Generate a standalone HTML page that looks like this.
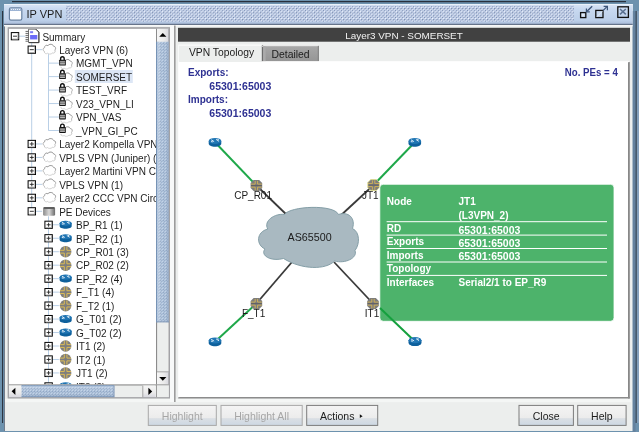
<!DOCTYPE html><html><head><meta charset="utf-8"><style>html,body{margin:0;padding:0;width:639px;height:432px;overflow:hidden;background:#7194b4}</style></head><body><svg width="639" height="432" viewBox="0 0 639 432" style="position:absolute;left:0;top:0;will-change:transform;font-family:'Liberation Sans',sans-serif"><defs><pattern id="tb" width="3.6" height="3.6" patternUnits="userSpaceOnUse"><rect width="3.6" height="3.6" fill="#bccbe6"/><rect x="0" y="0" width="1.1" height="1.1" fill="#f6f9ff"/><rect x="1.8" y="1.8" width="1.1" height="1.1" fill="#f6f9ff"/><rect x="1.00" y="1.00" width="1.1" height="1.1" fill="#62749a"/><rect x="2.80" y="2.80" width="1.1" height="1.1" fill="#62749a"/></pattern><pattern id="sb" width="3.0" height="3.0" patternUnits="userSpaceOnUse"><rect width="3.0" height="3.0" fill="#abc0da"/><rect x="0" y="0" width="0.9" height="0.9" fill="#cddaec"/><rect x="1.5" y="1.5" width="0.9" height="0.9" fill="#cddaec"/><rect x="0.85" y="0.85" width="0.9" height="0.9" fill="#7a92b4"/><rect x="2.35" y="2.35" width="0.9" height="0.9" fill="#7a92b4"/></pattern><linearGradient id="tg" x1="0" y1="0" x2="0" y2="1"><stop offset="0" stop-color="#dbe6f6"/><stop offset="0.25" stop-color="#c8d9f0"/><stop offset="0.8" stop-color="#bccfe9"/><stop offset="1" stop-color="#a8bad6"/></linearGradient><linearGradient id="btng" x1="0" y1="0" x2="0" y2="1"><stop offset="0" stop-color="#f4f4f4"/><stop offset="0.62" stop-color="#ececec"/><stop offset="0.66" stop-color="#dadfe4"/><stop offset="1" stop-color="#cdd8e3"/></linearGradient><linearGradient id="arrg" x1="0" y1="0" x2="1" y2="0"><stop offset="0" stop-color="#f6f6f6"/><stop offset="0.6" stop-color="#eaeaea"/><stop offset="1" stop-color="#d6d6de"/></linearGradient><linearGradient id="arrgv" x1="0" y1="0" x2="0" y2="1"><stop offset="0" stop-color="#f6f6f6"/><stop offset="0.6" stop-color="#eaeaea"/><stop offset="1" stop-color="#d6d6de"/></linearGradient><linearGradient id="tab2g" x1="0" y1="0" x2="0" y2="1"><stop offset="0" stop-color="#a8a8a8"/><stop offset="1" stop-color="#969696"/></linearGradient><linearGradient id="thg" x1="0" y1="0" x2="0" y2="1"><stop offset="0" stop-color="#ffffff" stop-opacity="0.25"/><stop offset="0.5" stop-color="#ffffff" stop-opacity="0"/><stop offset="1" stop-color="#46648c" stop-opacity="0.25"/></linearGradient><linearGradient id="tvg" x1="0" y1="0" x2="1" y2="0"><stop offset="0" stop-color="#ffffff" stop-opacity="0.25"/><stop offset="0.5" stop-color="#ffffff" stop-opacity="0"/><stop offset="1" stop-color="#46648c" stop-opacity="0.2"/></linearGradient></defs><rect x="0" y="0" width="639" height="432" fill="#6d92ae"/><rect x="12" y="1" width="614" height="1.2" fill="#28303c"/><rect x="2" y="11" width="1.1" height="412" fill="#2c3442"/><rect x="4" y="4" width="628.6" height="427" fill="#eceeed"/><rect x="4" y="4" width="1" height="427" fill="#727c8c"/><rect x="631.6" y="4" width="1" height="427" fill="#f2f4f4"/><rect x="632.6" y="11" width="3" height="421" fill="#64829f"/><rect x="636.7" y="11" width="2.3" height="412" fill="#84a0bc"/><rect x="635.6" y="11" width="1.1" height="412" fill="#36404e"/><rect x="4" y="4" width="628.6" height="20.5" fill="url(#tg)"/><rect x="4" y="4" width="628.6" height="0.9" fill="#eef3fb"/><rect x="66" y="5.8" width="508" height="16" fill="url(#tb)"/><rect x="4" y="23.8" width="628.6" height="1.2" fill="#66748a"/><rect x="4" y="25" width="628.6" height="1.4" fill="#f8f8f8"/><rect x="9.4" y="7.8" width="12.4" height="12.4" rx="1.6" fill="#ffffff" stroke="#6680a0" stroke-width="1.2"/><rect x="10" y="8.4" width="11.2" height="2.6" fill="#9db4d4"/><path d="M11 9.5h1M13 9.5h1M15 9.5h1M17 9.5h1M19 9.5h1" stroke="#fff" stroke-width="0.8"/><text x="26.5" y="18" font-size="11" fill="#1c1c1c">IP VPN</text><g fill="none" stroke="#111" stroke-width="1.3"><rect x="580.6" y="12.6" width="5.2" height="5"/><rect x="595.8" y="10.4" width="7.2" height="7.2"/><rect x="617.8" y="6.8" width="10.6" height="10.6"/></g><g stroke="#3c5478" stroke-width="1.1" fill="none"><path d="M587 11.2 L592.2 6.2" stroke-width="1.3"/><path d="M586.4 8.4 V11.8 H589.8" stroke-width="1.2"/><path d="M597 16.6 L602.2 11.4" stroke="#e8f0fa" stroke-width="1"/><path d="M603 10.6 L607 6.6" stroke-width="1.3"/><path d="M603.6 6.4 H607.4 V10.2" stroke-width="1.2"/><path d="M620 9 L625.8 14.4 M625.8 9 L620 14.4" stroke="#5a7090" stroke-width="1.5"/></g><rect x="581.8" y="13.8" width="2.6" height="2.6" fill="#dfe8f4"/><rect x="8.4" y="28" width="161.1" height="369.8" fill="#ffffff" stroke="#a2a2a6" stroke-width="1.2"/><defs><linearGradient id="peg" x1="0" x2="1"><stop offset="0" stop-color="#8a8a8a"/><stop offset="0.5" stop-color="#d8d8d8"/><stop offset="1" stop-color="#6a6a6a"/></linearGradient><linearGradient id="cg" x1="0" y1="0" x2="0" y2="1"><stop offset="0" stop-color="#8a8a8a"/><stop offset="0.6" stop-color="#b4b4b4"/><stop offset="1" stop-color="#d4d4d4"/></linearGradient><linearGradient id="cg2" x1="0" y1="0" x2="0" y2="1"><stop offset="0" stop-color="#909090"/><stop offset="0.5" stop-color="#b0b0b0"/><stop offset="1" stop-color="#d8d8d8"/></linearGradient><clipPath id="tc"><rect x="9" y="28.5" width="147" height="356"/></clipPath></defs><g clip-path="url(#tc)"><rect x="74.8" y="70.01" width="58" height="13" fill="#dce6f5"/><g stroke="#b9cfe6" stroke-width="1" fill="none"><path d="M31.7 43 V211.31" /><path d="M48.5 53.67 V130.49"/><path d="M48.5 216.31 V400"/><path d="M19.00 36.20 H25.30"/><path d="M31.50 49.67 H42.10"/><path d="M48.30 63.14 H58.90"/><path d="M48.30 76.61 H58.90"/><path d="M48.30 90.08 H58.90"/><path d="M48.30 103.55 H58.90"/><path d="M48.30 117.02 H58.90"/><path d="M48.30 130.49 H58.90"/><path d="M31.50 143.96 H42.10"/><path d="M31.50 157.43 H42.10"/><path d="M31.50 170.90 H42.10"/><path d="M31.50 184.37 H42.10"/><path d="M31.50 197.84 H42.10"/><path d="M31.50 211.31 H42.10"/><path d="M48.30 224.78 H58.90"/><path d="M48.30 238.25 H58.90"/><path d="M48.30 251.72 H58.90"/><path d="M48.30 265.19 H58.90"/><path d="M48.30 278.66 H58.90"/><path d="M48.30 292.13 H58.90"/><path d="M48.30 305.60 H58.90"/><path d="M48.30 319.07 H58.90"/><path d="M48.30 332.54 H58.90"/><path d="M48.30 346.01 H58.90"/><path d="M48.30 359.48 H58.90"/><path d="M48.30 372.95 H58.90"/><path d="M48.30 386.42 H58.90"/></g><rect x="11.30" y="32.60" width="7.4" height="7.2" fill="#fff" stroke="#000" stroke-width="1"/><path d="M12.30 39.10 H17.90 V33.40" fill="none" stroke="#a0a0a0" stroke-width="0.8"/><path d="M13.00 36.20 H17.00" stroke="#222" stroke-width="0.9"/><g transform="translate(25.30,28.80)"><path d="M3.2 0.4 H10.6 L13.6 3.4 V13.8 H3.2 Z" fill="#fff" stroke="#666" stroke-width="0.9"/><path d="M13.6 3.4 V13.8 H3.6" fill="none" stroke="#3c3c3c" stroke-width="1"/><path d="M10.6 0.4 L13.6 3.4" fill="none" stroke="#3c3c3c" stroke-width="1"/><rect x="4.8" y="2.4" width="3" height="2" fill="#7c7cf4"/><rect x="4.8" y="6.2" width="7.2" height="4.4" fill="#6c6cf8"/><path d="M0.2 2.6h3M0.2 4.6h3M0.2 6.6h3M0.2 8.6h3M0.2 10.6h3M0.2 12.4h3" stroke="#555" stroke-width="0.9"/></g><text x="42.40" y="40.50" font-size="10" fill="#1e1e1e">Summary</text><rect x="28.10" y="46.07" width="7.4" height="7.2" fill="#fff" stroke="#000" stroke-width="1"/><path d="M29.10 52.57 H34.70 V46.87" fill="none" stroke="#a0a0a0" stroke-width="0.8"/><path d="M29.80 49.67 H33.80" stroke="#222" stroke-width="0.9"/><g transform="translate(42.30,43.67)" fill="none"><path d="M2 7.6 C0.3 7.2 0.3 4.2 2.3 4 C2 2 4.2 1 5.6 2 C6.5 0.2 10.5 0 11.3 2.6 C13.5 2.6 14 5.2 12.6 6.4 C13.6 8.4 11.8 10 10 9.4 C9 10.8 6 10.8 5.2 9.6 C4 10.6 2 10 2 7.6 Z" stroke="url(#cg)" stroke-width="1"/></g><text x="59.20" y="53.97" font-size="10" fill="#1e1e1e">Layer3 VPN (6)</text><g transform="translate(58.90,55.74)"><path d="M6.5 4.6 C7.5 3.4 10.5 3.2 11.3 5.4 C13.5 5.4 14 8 12.6 9.2 C13.6 11.2 11.8 12.8 10 12.2 C9 13.6 6 13.6 5.2 12.4 C4 13.4 2 12.8 2 11" fill="none" stroke="url(#cg2)" stroke-width="1"/><path d="M1.7 4.4 V3 C1.7 0.4 5.3 0.4 5.3 3 V4.4" fill="none" stroke="#111" stroke-width="1.4"/><rect x="0.3" y="4" width="6.6" height="5.8" rx="0.6" fill="#111"/><rect x="1.2" y="5" width="4.8" height="3.9" fill="#6c6c6c"/><rect x="1.2" y="5.6" width="4.8" height="0.9" fill="#b4b4b4"/><rect x="1.2" y="7.7" width="4.8" height="0.8" fill="#dedede"/></g><text x="76.00" y="67.44" font-size="10" fill="#1e1e1e">MGMT_VPN</text><g transform="translate(58.90,69.21)"><path d="M6.5 4.6 C7.5 3.4 10.5 3.2 11.3 5.4 C13.5 5.4 14 8 12.6 9.2 C13.6 11.2 11.8 12.8 10 12.2 C9 13.6 6 13.6 5.2 12.4 C4 13.4 2 12.8 2 11" fill="none" stroke="url(#cg2)" stroke-width="1"/><path d="M1.7 4.4 V3 C1.7 0.4 5.3 0.4 5.3 3 V4.4" fill="none" stroke="#111" stroke-width="1.4"/><rect x="0.3" y="4" width="6.6" height="5.8" rx="0.6" fill="#111"/><rect x="1.2" y="5" width="4.8" height="3.9" fill="#6c6c6c"/><rect x="1.2" y="5.6" width="4.8" height="0.9" fill="#b4b4b4"/><rect x="1.2" y="7.7" width="4.8" height="0.8" fill="#dedede"/></g><text x="76.00" y="80.91" font-size="10" fill="#1e1e1e">SOMERSET</text><g transform="translate(58.90,82.68)"><path d="M6.5 4.6 C7.5 3.4 10.5 3.2 11.3 5.4 C13.5 5.4 14 8 12.6 9.2 C13.6 11.2 11.8 12.8 10 12.2 C9 13.6 6 13.6 5.2 12.4 C4 13.4 2 12.8 2 11" fill="none" stroke="url(#cg2)" stroke-width="1"/><path d="M1.7 4.4 V3 C1.7 0.4 5.3 0.4 5.3 3 V4.4" fill="none" stroke="#111" stroke-width="1.4"/><rect x="0.3" y="4" width="6.6" height="5.8" rx="0.6" fill="#111"/><rect x="1.2" y="5" width="4.8" height="3.9" fill="#6c6c6c"/><rect x="1.2" y="5.6" width="4.8" height="0.9" fill="#b4b4b4"/><rect x="1.2" y="7.7" width="4.8" height="0.8" fill="#dedede"/></g><text x="76.00" y="94.38" font-size="10" fill="#1e1e1e">TEST_VRF</text><g transform="translate(58.90,96.15)"><path d="M6.5 4.6 C7.5 3.4 10.5 3.2 11.3 5.4 C13.5 5.4 14 8 12.6 9.2 C13.6 11.2 11.8 12.8 10 12.2 C9 13.6 6 13.6 5.2 12.4 C4 13.4 2 12.8 2 11" fill="none" stroke="url(#cg2)" stroke-width="1"/><path d="M1.7 4.4 V3 C1.7 0.4 5.3 0.4 5.3 3 V4.4" fill="none" stroke="#111" stroke-width="1.4"/><rect x="0.3" y="4" width="6.6" height="5.8" rx="0.6" fill="#111"/><rect x="1.2" y="5" width="4.8" height="3.9" fill="#6c6c6c"/><rect x="1.2" y="5.6" width="4.8" height="0.9" fill="#b4b4b4"/><rect x="1.2" y="7.7" width="4.8" height="0.8" fill="#dedede"/></g><text x="76.00" y="107.85" font-size="10" fill="#1e1e1e">V23_VPN_LI</text><g transform="translate(58.90,109.62)"><path d="M6.5 4.6 C7.5 3.4 10.5 3.2 11.3 5.4 C13.5 5.4 14 8 12.6 9.2 C13.6 11.2 11.8 12.8 10 12.2 C9 13.6 6 13.6 5.2 12.4 C4 13.4 2 12.8 2 11" fill="none" stroke="url(#cg2)" stroke-width="1"/><path d="M1.7 4.4 V3 C1.7 0.4 5.3 0.4 5.3 3 V4.4" fill="none" stroke="#111" stroke-width="1.4"/><rect x="0.3" y="4" width="6.6" height="5.8" rx="0.6" fill="#111"/><rect x="1.2" y="5" width="4.8" height="3.9" fill="#6c6c6c"/><rect x="1.2" y="5.6" width="4.8" height="0.9" fill="#b4b4b4"/><rect x="1.2" y="7.7" width="4.8" height="0.8" fill="#dedede"/></g><text x="76.00" y="121.32" font-size="10" fill="#1e1e1e">VPN_VAS</text><g transform="translate(58.90,123.09)"><path d="M6.5 4.6 C7.5 3.4 10.5 3.2 11.3 5.4 C13.5 5.4 14 8 12.6 9.2 C13.6 11.2 11.8 12.8 10 12.2 C9 13.6 6 13.6 5.2 12.4 C4 13.4 2 12.8 2 11" fill="none" stroke="url(#cg2)" stroke-width="1"/><path d="M1.7 4.4 V3 C1.7 0.4 5.3 0.4 5.3 3 V4.4" fill="none" stroke="#111" stroke-width="1.4"/><rect x="0.3" y="4" width="6.6" height="5.8" rx="0.6" fill="#111"/><rect x="1.2" y="5" width="4.8" height="3.9" fill="#6c6c6c"/><rect x="1.2" y="5.6" width="4.8" height="0.9" fill="#b4b4b4"/><rect x="1.2" y="7.7" width="4.8" height="0.8" fill="#dedede"/></g><text x="76.00" y="134.79" font-size="10" fill="#1e1e1e">_VPN_GI_PC</text><rect x="28.10" y="140.36" width="7.4" height="7.2" fill="#fff" stroke="#000" stroke-width="1"/><path d="M29.10 146.86 H34.70 V141.16" fill="none" stroke="#a0a0a0" stroke-width="0.8"/><path d="M29.80 143.96 H33.80" stroke="#222" stroke-width="0.9"/><path d="M31.80 141.96 V145.96" stroke="#222" stroke-width="0.9"/><g transform="translate(42.30,137.96)" fill="none"><path d="M2 7.6 C0.3 7.2 0.3 4.2 2.3 4 C2 2 4.2 1 5.6 2 C6.5 0.2 10.5 0 11.3 2.6 C13.5 2.6 14 5.2 12.6 6.4 C13.6 8.4 11.8 10 10 9.4 C9 10.8 6 10.8 5.2 9.6 C4 10.6 2 10 2 7.6 Z" stroke="url(#cg)" stroke-width="1"/></g><text x="59.20" y="148.26" font-size="10" fill="#1e1e1e">Layer2 Kompella VPN (0)</text><rect x="28.10" y="153.83" width="7.4" height="7.2" fill="#fff" stroke="#000" stroke-width="1"/><path d="M29.10 160.33 H34.70 V154.63" fill="none" stroke="#a0a0a0" stroke-width="0.8"/><path d="M29.80 157.43 H33.80" stroke="#222" stroke-width="0.9"/><path d="M31.80 155.43 V159.43" stroke="#222" stroke-width="0.9"/><g transform="translate(42.30,151.43)" fill="none"><path d="M2 7.6 C0.3 7.2 0.3 4.2 2.3 4 C2 2 4.2 1 5.6 2 C6.5 0.2 10.5 0 11.3 2.6 C13.5 2.6 14 5.2 12.6 6.4 C13.6 8.4 11.8 10 10 9.4 C9 10.8 6 10.8 5.2 9.6 C4 10.6 2 10 2 7.6 Z" stroke="url(#cg)" stroke-width="1"/></g><text x="59.20" y="161.73" font-size="10" fill="#1e1e1e">VPLS VPN (Juniper) (0)</text><rect x="28.10" y="167.30" width="7.4" height="7.2" fill="#fff" stroke="#000" stroke-width="1"/><path d="M29.10 173.80 H34.70 V168.10" fill="none" stroke="#a0a0a0" stroke-width="0.8"/><path d="M29.80 170.90 H33.80" stroke="#222" stroke-width="0.9"/><path d="M31.80 168.90 V172.90" stroke="#222" stroke-width="0.9"/><g transform="translate(42.30,164.90)" fill="none"><path d="M2 7.6 C0.3 7.2 0.3 4.2 2.3 4 C2 2 4.2 1 5.6 2 C6.5 0.2 10.5 0 11.3 2.6 C13.5 2.6 14 5.2 12.6 6.4 C13.6 8.4 11.8 10 10 9.4 C9 10.8 6 10.8 5.2 9.6 C4 10.6 2 10 2 7.6 Z" stroke="url(#cg)" stroke-width="1"/></g><text x="59.20" y="175.20" font-size="10" fill="#1e1e1e">Layer2 Martini VPN Circuits</text><rect x="28.10" y="180.77" width="7.4" height="7.2" fill="#fff" stroke="#000" stroke-width="1"/><path d="M29.10 187.27 H34.70 V181.57" fill="none" stroke="#a0a0a0" stroke-width="0.8"/><path d="M29.80 184.37 H33.80" stroke="#222" stroke-width="0.9"/><path d="M31.80 182.37 V186.37" stroke="#222" stroke-width="0.9"/><g transform="translate(42.30,178.37)" fill="none"><path d="M2 7.6 C0.3 7.2 0.3 4.2 2.3 4 C2 2 4.2 1 5.6 2 C6.5 0.2 10.5 0 11.3 2.6 C13.5 2.6 14 5.2 12.6 6.4 C13.6 8.4 11.8 10 10 9.4 C9 10.8 6 10.8 5.2 9.6 C4 10.6 2 10 2 7.6 Z" stroke="url(#cg)" stroke-width="1"/></g><text x="59.20" y="188.67" font-size="10" fill="#1e1e1e">VPLS VPN (1)</text><rect x="28.10" y="194.24" width="7.4" height="7.2" fill="#fff" stroke="#000" stroke-width="1"/><path d="M29.10 200.74 H34.70 V195.04" fill="none" stroke="#a0a0a0" stroke-width="0.8"/><path d="M29.80 197.84 H33.80" stroke="#222" stroke-width="0.9"/><path d="M31.80 195.84 V199.84" stroke="#222" stroke-width="0.9"/><g transform="translate(42.30,191.84)" fill="none"><path d="M2 7.6 C0.3 7.2 0.3 4.2 2.3 4 C2 2 4.2 1 5.6 2 C6.5 0.2 10.5 0 11.3 2.6 C13.5 2.6 14 5.2 12.6 6.4 C13.6 8.4 11.8 10 10 9.4 C9 10.8 6 10.8 5.2 9.6 C4 10.6 2 10 2 7.6 Z" stroke="url(#cg)" stroke-width="1"/></g><text x="59.20" y="202.14" font-size="10" fill="#1e1e1e">Layer2 CCC VPN Circuits</text><rect x="28.10" y="207.71" width="7.4" height="7.2" fill="#fff" stroke="#000" stroke-width="1"/><path d="M29.10 214.21 H34.70 V208.51" fill="none" stroke="#a0a0a0" stroke-width="0.8"/><path d="M29.80 211.31 H33.80" stroke="#222" stroke-width="0.9"/><g transform="translate(43.10,206.81)"><rect x="0" y="0.3" width="12" height="8.7" rx="1.6" fill="url(#peg)"/><rect x="0.4" y="0.3" width="11.2" height="2" rx="1" fill="#5e5e5e"/></g><text x="59.20" y="215.61" font-size="10" fill="#1e1e1e">PE Devices</text><rect x="44.90" y="221.18" width="7.4" height="7.2" fill="#fff" stroke="#000" stroke-width="1"/><path d="M45.90 227.68 H51.50 V221.98" fill="none" stroke="#a0a0a0" stroke-width="0.8"/><path d="M46.60 224.78 H50.60" stroke="#222" stroke-width="0.9"/><path d="M48.60 222.78 V226.78" stroke="#222" stroke-width="0.9"/><g transform="translate(59.40,220.38)"><path d="M0.2 2.8 V5.6 C0.2 7.4 3 8.3 6.25 8.3 C9.5 8.3 12.3 7.4 12.3 5.6 V2.8 Z" fill="#0e609c"/><ellipse cx="6.25" cy="2.9" rx="6.05" ry="2.6" fill="#1f74b2"/><path d="M2.6 1.9 L5.4 3.6 M2.4 3.6 L4.2 3.9 M7.4 1.6 L10.2 3.4 M8.6 1.5 L10 1.9" stroke="#f0f8ff" stroke-width="0.9" fill="none"/></g><text x="76.00" y="229.08" font-size="10" fill="#1e1e1e">BP_R1 (1)</text><rect x="44.90" y="234.65" width="7.4" height="7.2" fill="#fff" stroke="#000" stroke-width="1"/><path d="M45.90 241.15 H51.50 V235.45" fill="none" stroke="#a0a0a0" stroke-width="0.8"/><path d="M46.60 238.25 H50.60" stroke="#222" stroke-width="0.9"/><path d="M48.60 236.25 V240.25" stroke="#222" stroke-width="0.9"/><g transform="translate(59.40,233.85)"><path d="M0.2 2.8 V5.6 C0.2 7.4 3 8.3 6.25 8.3 C9.5 8.3 12.3 7.4 12.3 5.6 V2.8 Z" fill="#0e609c"/><ellipse cx="6.25" cy="2.9" rx="6.05" ry="2.6" fill="#1f74b2"/><path d="M2.6 1.9 L5.4 3.6 M2.4 3.6 L4.2 3.9 M7.4 1.6 L10.2 3.4 M8.6 1.5 L10 1.9" stroke="#f0f8ff" stroke-width="0.9" fill="none"/></g><text x="76.00" y="242.55" font-size="10" fill="#1e1e1e">BP_R2 (1)</text><rect x="44.90" y="248.12" width="7.4" height="7.2" fill="#fff" stroke="#000" stroke-width="1"/><path d="M45.90 254.62 H51.50 V248.92" fill="none" stroke="#a0a0a0" stroke-width="0.8"/><path d="M46.60 251.72 H50.60" stroke="#222" stroke-width="0.9"/><path d="M48.60 249.72 V253.72" stroke="#222" stroke-width="0.9"/><g transform="translate(59.60,245.92)"><circle cx="6" cy="5.8" r="5.8" fill="#7e7e7e"/><path d="M4.7 0.6 V4.4 H0.5 M7.3 0.6 V4.4 H11.5 M4.7 11 V7.2 H0.5 M7.3 11 V7.2 H11.5" fill="none" stroke="#dcbc56" stroke-width="1"/></g><text x="76.00" y="256.02" font-size="10" fill="#1e1e1e">CP_R01 (3)</text><rect x="44.90" y="261.59" width="7.4" height="7.2" fill="#fff" stroke="#000" stroke-width="1"/><path d="M45.90 268.09 H51.50 V262.39" fill="none" stroke="#a0a0a0" stroke-width="0.8"/><path d="M46.60 265.19 H50.60" stroke="#222" stroke-width="0.9"/><path d="M48.60 263.19 V267.19" stroke="#222" stroke-width="0.9"/><g transform="translate(59.60,259.39)"><circle cx="6" cy="5.8" r="5.8" fill="#7e7e7e"/><path d="M4.7 0.6 V4.4 H0.5 M7.3 0.6 V4.4 H11.5 M4.7 11 V7.2 H0.5 M7.3 11 V7.2 H11.5" fill="none" stroke="#dcbc56" stroke-width="1"/></g><text x="76.00" y="269.49" font-size="10" fill="#1e1e1e">CP_R02 (2)</text><rect x="44.90" y="275.06" width="7.4" height="7.2" fill="#fff" stroke="#000" stroke-width="1"/><path d="M45.90 281.56 H51.50 V275.86" fill="none" stroke="#a0a0a0" stroke-width="0.8"/><path d="M46.60 278.66 H50.60" stroke="#222" stroke-width="0.9"/><path d="M48.60 276.66 V280.66" stroke="#222" stroke-width="0.9"/><g transform="translate(59.40,274.26)"><path d="M0.2 2.8 V5.6 C0.2 7.4 3 8.3 6.25 8.3 C9.5 8.3 12.3 7.4 12.3 5.6 V2.8 Z" fill="#0e609c"/><ellipse cx="6.25" cy="2.9" rx="6.05" ry="2.6" fill="#1f74b2"/><path d="M2.6 1.9 L5.4 3.6 M2.4 3.6 L4.2 3.9 M7.4 1.6 L10.2 3.4 M8.6 1.5 L10 1.9" stroke="#f0f8ff" stroke-width="0.9" fill="none"/></g><text x="76.00" y="282.96" font-size="10" fill="#1e1e1e">EP_R2 (4)</text><rect x="44.90" y="288.53" width="7.4" height="7.2" fill="#fff" stroke="#000" stroke-width="1"/><path d="M45.90 295.03 H51.50 V289.33" fill="none" stroke="#a0a0a0" stroke-width="0.8"/><path d="M46.60 292.13 H50.60" stroke="#222" stroke-width="0.9"/><path d="M48.60 290.13 V294.13" stroke="#222" stroke-width="0.9"/><g transform="translate(59.60,286.33)"><circle cx="6" cy="5.8" r="5.8" fill="#7e7e7e"/><path d="M4.7 0.6 V4.4 H0.5 M7.3 0.6 V4.4 H11.5 M4.7 11 V7.2 H0.5 M7.3 11 V7.2 H11.5" fill="none" stroke="#dcbc56" stroke-width="1"/></g><text x="76.00" y="296.43" font-size="10" fill="#1e1e1e">F_T1 (4)</text><rect x="44.90" y="302.00" width="7.4" height="7.2" fill="#fff" stroke="#000" stroke-width="1"/><path d="M45.90 308.50 H51.50 V302.80" fill="none" stroke="#a0a0a0" stroke-width="0.8"/><path d="M46.60 305.60 H50.60" stroke="#222" stroke-width="0.9"/><path d="M48.60 303.60 V307.60" stroke="#222" stroke-width="0.9"/><g transform="translate(59.60,299.80)"><circle cx="6" cy="5.8" r="5.8" fill="#7e7e7e"/><path d="M4.7 0.6 V4.4 H0.5 M7.3 0.6 V4.4 H11.5 M4.7 11 V7.2 H0.5 M7.3 11 V7.2 H11.5" fill="none" stroke="#dcbc56" stroke-width="1"/></g><text x="76.00" y="309.90" font-size="10" fill="#1e1e1e">F_T2 (1)</text><rect x="44.90" y="315.47" width="7.4" height="7.2" fill="#fff" stroke="#000" stroke-width="1"/><path d="M45.90 321.97 H51.50 V316.27" fill="none" stroke="#a0a0a0" stroke-width="0.8"/><path d="M46.60 319.07 H50.60" stroke="#222" stroke-width="0.9"/><path d="M48.60 317.07 V321.07" stroke="#222" stroke-width="0.9"/><g transform="translate(59.40,314.67)"><path d="M0.2 2.8 V5.6 C0.2 7.4 3 8.3 6.25 8.3 C9.5 8.3 12.3 7.4 12.3 5.6 V2.8 Z" fill="#0e609c"/><ellipse cx="6.25" cy="2.9" rx="6.05" ry="2.6" fill="#1f74b2"/><path d="M2.6 1.9 L5.4 3.6 M2.4 3.6 L4.2 3.9 M7.4 1.6 L10.2 3.4 M8.6 1.5 L10 1.9" stroke="#f0f8ff" stroke-width="0.9" fill="none"/></g><text x="76.00" y="323.37" font-size="10" fill="#1e1e1e">G_T01 (2)</text><rect x="44.90" y="328.94" width="7.4" height="7.2" fill="#fff" stroke="#000" stroke-width="1"/><path d="M45.90 335.44 H51.50 V329.74" fill="none" stroke="#a0a0a0" stroke-width="0.8"/><path d="M46.60 332.54 H50.60" stroke="#222" stroke-width="0.9"/><path d="M48.60 330.54 V334.54" stroke="#222" stroke-width="0.9"/><g transform="translate(59.40,328.14)"><path d="M0.2 2.8 V5.6 C0.2 7.4 3 8.3 6.25 8.3 C9.5 8.3 12.3 7.4 12.3 5.6 V2.8 Z" fill="#0e609c"/><ellipse cx="6.25" cy="2.9" rx="6.05" ry="2.6" fill="#1f74b2"/><path d="M2.6 1.9 L5.4 3.6 M2.4 3.6 L4.2 3.9 M7.4 1.6 L10.2 3.4 M8.6 1.5 L10 1.9" stroke="#f0f8ff" stroke-width="0.9" fill="none"/></g><text x="76.00" y="336.84" font-size="10" fill="#1e1e1e">G_T02 (2)</text><rect x="44.90" y="342.41" width="7.4" height="7.2" fill="#fff" stroke="#000" stroke-width="1"/><path d="M45.90 348.91 H51.50 V343.21" fill="none" stroke="#a0a0a0" stroke-width="0.8"/><path d="M46.60 346.01 H50.60" stroke="#222" stroke-width="0.9"/><path d="M48.60 344.01 V348.01" stroke="#222" stroke-width="0.9"/><g transform="translate(59.60,340.21)"><circle cx="6" cy="5.8" r="5.8" fill="#7e7e7e"/><path d="M4.7 0.6 V4.4 H0.5 M7.3 0.6 V4.4 H11.5 M4.7 11 V7.2 H0.5 M7.3 11 V7.2 H11.5" fill="none" stroke="#dcbc56" stroke-width="1"/></g><text x="76.00" y="350.31" font-size="10" fill="#1e1e1e">IT1 (2)</text><rect x="44.90" y="355.88" width="7.4" height="7.2" fill="#fff" stroke="#000" stroke-width="1"/><path d="M45.90 362.38 H51.50 V356.68" fill="none" stroke="#a0a0a0" stroke-width="0.8"/><path d="M46.60 359.48 H50.60" stroke="#222" stroke-width="0.9"/><path d="M48.60 357.48 V361.48" stroke="#222" stroke-width="0.9"/><g transform="translate(59.60,353.68)"><circle cx="6" cy="5.8" r="5.8" fill="#7e7e7e"/><path d="M4.7 0.6 V4.4 H0.5 M7.3 0.6 V4.4 H11.5 M4.7 11 V7.2 H0.5 M7.3 11 V7.2 H11.5" fill="none" stroke="#dcbc56" stroke-width="1"/></g><text x="76.00" y="363.78" font-size="10" fill="#1e1e1e">IT2 (1)</text><rect x="44.90" y="369.35" width="7.4" height="7.2" fill="#fff" stroke="#000" stroke-width="1"/><path d="M45.90 375.85 H51.50 V370.15" fill="none" stroke="#a0a0a0" stroke-width="0.8"/><path d="M46.60 372.95 H50.60" stroke="#222" stroke-width="0.9"/><path d="M48.60 370.95 V374.95" stroke="#222" stroke-width="0.9"/><g transform="translate(59.60,367.15)"><circle cx="6" cy="5.8" r="5.8" fill="#7e7e7e"/><path d="M4.7 0.6 V4.4 H0.5 M7.3 0.6 V4.4 H11.5 M4.7 11 V7.2 H0.5 M7.3 11 V7.2 H11.5" fill="none" stroke="#dcbc56" stroke-width="1"/></g><text x="76.00" y="377.25" font-size="10" fill="#1e1e1e">JT1 (2)</text><rect x="44.90" y="382.82" width="7.4" height="7.2" fill="#fff" stroke="#000" stroke-width="1"/><path d="M45.90 389.32 H51.50 V383.62" fill="none" stroke="#a0a0a0" stroke-width="0.8"/><path d="M46.60 386.42 H50.60" stroke="#222" stroke-width="0.9"/><path d="M48.60 384.42 V388.42" stroke="#222" stroke-width="0.9"/><g transform="translate(59.40,382.02)"><path d="M0.2 2.8 V5.6 C0.2 7.4 3 8.3 6.25 8.3 C9.5 8.3 12.3 7.4 12.3 5.6 V2.8 Z" fill="#0e609c"/><ellipse cx="6.25" cy="2.9" rx="6.05" ry="2.6" fill="#1f74b2"/><path d="M2.6 1.9 L5.4 3.6 M2.4 3.6 L4.2 3.9 M7.4 1.6 L10.2 3.4 M8.6 1.5 L10 1.9" stroke="#f0f8ff" stroke-width="0.9" fill="none"/></g><text x="76.00" y="390.72" font-size="10" fill="#1e1e1e">IT3 (3)</text></g><rect x="156" y="28.5" width="13.2" height="356" fill="#eceeed"/><rect x="156" y="28.5" width="1.1" height="356" fill="#8c8c8c"/><rect x="168.2" y="28.5" width="1" height="356" fill="#c8c8c8"/><rect x="157" y="28.6" width="12" height="13.2" fill="url(#arrg)"/><rect x="168" y="28.6" width="1.1" height="13.2" fill="#b4b4b8"/><path d="M162.8 32.9 L166.4 36.8 H159.2 Z" fill="#000"/><rect x="156.5" y="41.8" width="12.6" height="280.4" fill="url(#sb)"/><rect x="156.5" y="41.8" width="12.6" height="280.4" fill="url(#tvg)"/><rect x="156.2" y="41.8" width="1.1" height="280.4" fill="#6a8cb4"/><rect x="157.3" y="41.8" width="1" height="280.4" fill="#c6d6ea" opacity="0.8"/><rect x="167.8" y="41.8" width="1.2" height="280.4" fill="#98aac4" opacity="0.8"/><rect x="156.2" y="321.4" width="12.9" height="0.9" fill="#7d94b4"/><rect x="157" y="371.9" width="12" height="12.5" fill="url(#arrg)"/><rect x="157" y="371.4" width="12" height="0.9" fill="#a0a0a0"/><rect x="168" y="371.9" width="1.1" height="12.5" fill="#b4b4b8"/><path d="M159.2 377 H166.4 L162.8 380.8 Z" fill="#000"/><rect x="9" y="384.6" width="160.2" height="12.9" fill="#eceeed"/><rect x="9" y="384.4" width="160.2" height="1.1" fill="#8c8c8c"/><rect x="9" y="385.5" width="12.5" height="12" fill="url(#arrgv)"/><path d="M11.6 391.3 L15.4 387.7 V395 Z" fill="#000"/><rect x="21.5" y="385.4" width="92.6" height="12" fill="url(#sb)"/><rect x="21.5" y="385.4" width="92.6" height="12" fill="url(#thg)"/><rect x="21.5" y="385.4" width="92.6" height="1" fill="#6a8cb4"/><rect x="21.5" y="396.3" width="92.6" height="1" fill="#7a94b8"/><rect x="21.5" y="386.4" width="92.6" height="1" fill="#c6d6ea" opacity="0.8"/><rect x="113.6" y="385.4" width="0.9" height="12" fill="#7d94b4"/><rect x="142.5" y="385.5" width="13" height="12" fill="url(#arrgv)"/><rect x="142.3" y="385.5" width="1" height="12" fill="#a4a4a4"/><path d="M148.4 387.8 L152.2 391.4 L148.4 395 Z" fill="#000"/><rect x="156" y="385.5" width="13.2" height="12" fill="#eceeed"/><rect x="156" y="384.4" width="1" height="13" fill="#9a9a9a"/><rect x="8.4" y="28" width="161.1" height="369.8" fill="none" stroke="#a2a2a6" stroke-width="1.2"/><rect x="5" y="398.8" width="626" height="3.4" fill="#f4f6f5"/><rect x="170" y="26" width="4" height="376" fill="#f8f9f9"/><rect x="174" y="25.5" width="1.6" height="376.5" fill="#9c9c9c"/><rect x="178" y="27.8" width="452" height="13.9" fill="#414141"/><text x="404" y="39.2" font-size="9.9" fill="#f2f2f2" text-anchor="middle">Layer3 VPN - SOMERSET</text><rect x="179" y="62" width="450" height="336" fill="#ffffff"/><rect x="628" y="62" width="1.8" height="336.5" fill="#888888"/><rect x="178.2" y="397" width="451.5" height="1.5" fill="#8c8c8c"/><rect x="178.2" y="61.2" width="451" height="1" fill="#ffffff"/><rect x="178.2" y="44.8" width="1" height="352.5" fill="#ffffff"/><rect x="178.8" y="44.8" width="83.2" height="17.2" fill="#eceeed"/><rect x="178.8" y="44.6" width="83" height="1" fill="#ffffff"/><text x="189" y="55.6" font-size="10.3" fill="#1c1c1c">VPN Topology</text><rect x="262" y="45.5" width="56.8" height="15.6" fill="url(#tab2g)"/><rect x="261.8" y="45.5" width="1.3" height="15.6" fill="#6c6c6c"/><rect x="263.4" y="45.2" width="55" height="1" fill="#f0f0f0"/><path d="M262.2 47 L263.6 45.6" stroke="#f0f0f0" stroke-width="0.9"/><rect x="263.1" y="46.2" width="2.5" height="14.9" fill="#ababab"/><rect x="317.8" y="46" width="1" height="15" fill="#7e7e7e"/><text x="271.5" y="57.8" font-size="10.4" fill="#1c1c1c">Detailed</text><defs><clipPath id="cc"><rect x="180" y="63" width="448" height="334"/></clipPath></defs><g clip-path="url(#cc)"><g font-weight="bold" font-size="10" fill="#2e3192"><text x="188" y="76.2">Exports:</text><text x="209.3" y="89.7" textLength="62" lengthAdjust="spacingAndGlyphs">65301:65003</text><text x="188" y="102.9">Imports:</text><text x="209.3" y="116.5" textLength="62" lengthAdjust="spacingAndGlyphs">65301:65003</text><text x="617.8" y="76" text-anchor="end" textLength="53" lengthAdjust="spacingAndGlyphs">No. PEs = 4</text></g><g stroke="#1fa84a" stroke-width="2" fill="none"><path d="M215 142.2 L256.4 185.5"/><path d="M414.8 142.2 L373.6 185"/><path d="M215 341.7 L256.4 303.5"/></g><g stroke="#3a3a3a" stroke-width="1.8" fill="none"><path d="M256.4 185.5 L290 218"/><path d="M373.6 185 L338 218"/><path d="M256.4 303.5 L292 262"/><path d="M373 303.5 L334 262"/></g><path d="M284.5 214.5 C290 206 334 204 338.5 214.5 C348 211 356 218 352.5 228.5 C360 232 360 244 355 250.5 C358 258 345 264 334.5 261 C326 270 302 270 283.5 258.5 C270 262 260 255 265 249 C256 245 256 232 267.8 229 C263 221 275 213 284.5 214.5 Z" fill="#a9b9c1" stroke="#7d98a2" stroke-width="0.9"/><text x="287.6" y="240.9" font-size="10.5" fill="#1a1a1a" textLength="44" lengthAdjust="spacingAndGlyphs">AS65500</text><g transform="translate(208.60,137.70)"><path d="M0.1 3.2 V5.8 C0.1 7.8 3 9 6.4 9 C9.8 9 12.7 7.8 12.7 5.8 V3.2 Z" fill="#0e609c"/><ellipse cx="6.4" cy="3.2" rx="6.3" ry="3" fill="#2076b4"/><path d="M2.6 2.1 L5.5 3.9 M2.4 3.9 L4.2 4.2 M7.5 1.7 L10.4 3.6 M8.8 1.6 L10.2 2" stroke="#f0f8ff" stroke-width="0.9" fill="none"/></g><g transform="translate(408.40,137.70)"><path d="M0.1 3.2 V5.8 C0.1 7.8 3 9 6.4 9 C9.8 9 12.7 7.8 12.7 5.8 V3.2 Z" fill="#0e609c"/><ellipse cx="6.4" cy="3.2" rx="6.3" ry="3" fill="#2076b4"/><path d="M2.6 2.1 L5.5 3.9 M2.4 3.9 L4.2 4.2 M7.5 1.7 L10.4 3.6 M8.8 1.6 L10.2 2" stroke="#f0f8ff" stroke-width="0.9" fill="none"/></g><g transform="translate(208.60,337.20)"><path d="M0.1 3.2 V5.8 C0.1 7.8 3 9 6.4 9 C9.8 9 12.7 7.8 12.7 5.8 V3.2 Z" fill="#0e609c"/><ellipse cx="6.4" cy="3.2" rx="6.3" ry="3" fill="#2076b4"/><path d="M2.6 2.1 L5.5 3.9 M2.4 3.9 L4.2 4.2 M7.5 1.7 L10.4 3.6 M8.8 1.6 L10.2 2" stroke="#f0f8ff" stroke-width="0.9" fill="none"/></g><g transform="translate(408.60,337.00)"><path d="M0.1 3.2 V5.8 C0.1 7.8 3 9 6.4 9 C9.8 9 12.7 7.8 12.7 5.8 V3.2 Z" fill="#0e609c"/><ellipse cx="6.4" cy="3.2" rx="6.3" ry="3" fill="#2076b4"/><path d="M2.6 2.1 L5.5 3.9 M2.4 3.9 L4.2 4.2 M7.5 1.7 L10.4 3.6 M8.8 1.6 L10.2 2" stroke="#f0f8ff" stroke-width="0.9" fill="none"/></g><g transform="translate(250.40,179.90)"><path d="M3.2 0.2 H8.8 L11.8 3 V8.2 L8.8 11 H3.2 L0.2 8.2 V3 Z" fill="#7c7c7c"/><path d="M0.6 4.2 H4.8 V1 M11.4 4.2 H7.2 V1 M0.6 7.2 H4.8 V10.4 M11.4 7.2 H7.2 V10.4" fill="none" stroke="#d6b652" stroke-width="0.9"/><path d="M0.6 5.7 H11.4" stroke="#5e5e66" stroke-width="1"/></g><g transform="translate(367.60,179.40)"><path d="M3.2 0.2 H8.8 L11.8 3 V8.2 L8.8 11 H3.2 L0.2 8.2 V3 Z" fill="#7c7c7c"/><path d="M0.6 4.2 H4.8 V1 M11.4 4.2 H7.2 V1 M0.6 7.2 H4.8 V10.4 M11.4 7.2 H7.2 V10.4" fill="none" stroke="#d6b652" stroke-width="0.9"/><path d="M0.6 5.7 H11.4" stroke="#5e5e66" stroke-width="1"/><path d="M3.2 0.2 H8.8 L11.8 3 V8.2 L8.8 11 H3.2 L0.2 8.2 V3 Z" fill="none" stroke="#e6e27a" stroke-width="0.7"/></g><g transform="translate(250.40,297.90)"><path d="M3.2 0.2 H8.8 L11.8 3 V8.2 L8.8 11 H3.2 L0.2 8.2 V3 Z" fill="#7c7c7c"/><path d="M0.6 4.2 H4.8 V1 M11.4 4.2 H7.2 V1 M0.6 7.2 H4.8 V10.4 M11.4 7.2 H7.2 V10.4" fill="none" stroke="#d6b652" stroke-width="0.9"/><path d="M0.6 5.7 H11.4" stroke="#5e5e66" stroke-width="1"/></g><g transform="translate(367.00,297.90)"><path d="M3.2 0.2 H8.8 L11.8 3 V8.2 L8.8 11 H3.2 L0.2 8.2 V3 Z" fill="#7c7c7c"/><path d="M0.6 4.2 H4.8 V1 M11.4 4.2 H7.2 V1 M0.6 7.2 H4.8 V10.4 M11.4 7.2 H7.2 V10.4" fill="none" stroke="#d6b652" stroke-width="0.9"/><path d="M0.6 5.7 H11.4" stroke="#5e5e66" stroke-width="1"/></g><g font-size="10" fill="#1a1a1a"><text x="234.2" y="198.7">CP_R01</text><text x="362" y="198.9">JT1</text><text x="241.9" y="316.9">F_T1</text><text x="364.8" y="316.9">IT1</text></g><rect x="379.8" y="184.3" width="234.2" height="137" rx="3.5" fill="#4db36b" stroke="#ffffff" stroke-width="0.8"/><path d="M380 308 L415 341.5" stroke="#15a03e" stroke-width="2"/><g transform="translate(408.60,337.00)"><path d="M0.1 3.2 V5.8 C0.1 7.8 3 9 6.4 9 C9.8 9 12.7 7.8 12.7 5.8 V3.2 Z" fill="#0e609c"/><ellipse cx="6.4" cy="3.2" rx="6.3" ry="3" fill="#2076b4"/><path d="M2.6 2.1 L5.5 3.9 M2.4 3.9 L4.2 4.2 M7.5 1.7 L10.4 3.6 M8.8 1.6 L10.2 2" stroke="#f0f8ff" stroke-width="0.9" fill="none"/></g><g stroke="#fff" stroke-width="1"><path d="M386.6 221.7 H607"/><path d="M386.6 235.1 H607"/><path d="M386.6 248.5 H607"/><path d="M386.6 262 H607"/><path d="M386.6 275.4 H607"/></g><g font-weight="bold" font-size="10" fill="#fff"><text x="386.8" y="205">Node</text><text x="458.5" y="205">JT1</text><text x="458.5" y="219.1">(L3VPN_2)</text><text x="386.8" y="231.7">RD</text><text x="458.4" y="233.6" textLength="62" lengthAdjust="spacingAndGlyphs">65301:65003</text><text x="386.8" y="245.4">Exports</text><text x="458.4" y="246.8" textLength="62" lengthAdjust="spacingAndGlyphs">65301:65003</text><text x="386.8" y="258.8">Imports</text><text x="458.4" y="260.3" textLength="62" lengthAdjust="spacingAndGlyphs">65301:65003</text><text x="386.8" y="271.9">Topology</text><text x="386.8" y="285.6">Interfaces</text><text x="458.5" y="285.6">Serial2/1 to EP_R9</text></g></g><rect x="148.30" y="405.4" width="68.00" height="20" fill="url(#btng)" stroke="#a8a8a8" stroke-width="1"/><text x="182.30" y="419.6" font-size="10.5" fill="#a6a6a6" text-anchor="middle">Highlight</text><rect x="221.00" y="405.4" width="81.20" height="20" fill="url(#btng)" stroke="#a8a8a8" stroke-width="1"/><text x="261.60" y="419.6" font-size="10.5" fill="#a6a6a6" text-anchor="middle">Highlight All</text><rect x="306.70" y="405.4" width="71.00" height="20" fill="url(#btng)" stroke="#7c7c7c" stroke-width="1"/><text x="320.00" y="419.6" font-size="10.5" fill="#1c1c1c">Actions</text><path d="M359.8 414.3 L362.6 416.2 L359.8 418.1 Z" fill="#111"/><rect x="519.00" y="405.4" width="54.40" height="20" fill="url(#btng)" stroke="#7c7c7c" stroke-width="1"/><text x="546.20" y="419.6" font-size="10.5" fill="#1c1c1c" text-anchor="middle">Close</text><rect x="577.70" y="405.4" width="48.40" height="20" fill="url(#btng)" stroke="#7c7c7c" stroke-width="1"/><text x="601.90" y="419.6" font-size="10.5" fill="#1c1c1c" text-anchor="middle">Help</text></svg></body></html>
